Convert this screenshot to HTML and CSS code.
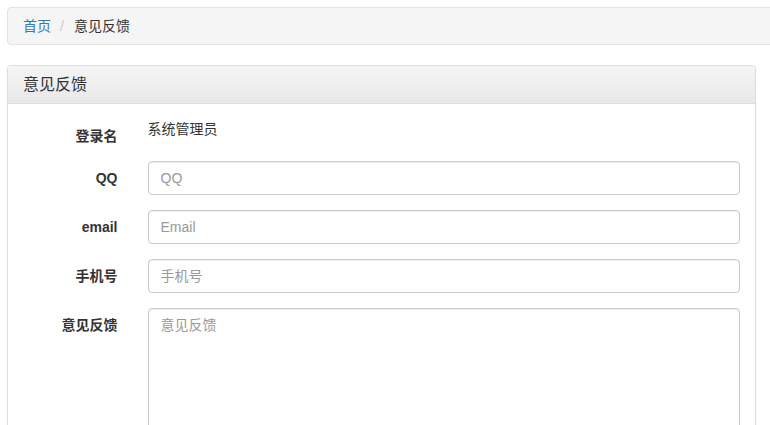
FILE: index.html
```html
<!DOCTYPE html>
<html lang="zh-CN">
<head>
    <meta charset="UTF-8">
    <meta name="viewport" content="width=device-width, initial-scale=1.0">
    <title>意见反馈</title>
    <link rel="stylesheet" href="styles.css">
</head>
<body>
    <div class="page">
        <ol class="breadcrumb">
            <li><a href="#">首页</a></li>
            <li class="active">意见反馈</li>
        </ol>

        <div class="panel">
            <div class="panel-heading">意见反馈</div>
            <div class="panel-body">
                <form class="form-horizontal">
                    <div class="form-group">
                        <label class="control-label">登录名</label>
                        <div class="control-col">
                            <p class="form-static">系统管理员</p>
                        </div>
                    </div>
                    <div class="form-group">
                        <label class="control-label" for="qq">QQ</label>
                        <div class="control-col">
                            <input type="text" id="qq" class="form-control" placeholder="QQ">
                        </div>
                    </div>
                    <div class="form-group">
                        <label class="control-label" for="email">email</label>
                        <div class="control-col">
                            <input type="text" id="email" class="form-control" placeholder="Email">
                        </div>
                    </div>
                    <div class="form-group">
                        <label class="control-label" for="phone">手机号</label>
                        <div class="control-col">
                            <input type="text" id="phone" class="form-control" placeholder="手机号">
                        </div>
                    </div>
                    <div class="form-group">
                        <label class="control-label" for="content">意见反馈</label>
                        <div class="control-col">
                            <textarea id="content" class="form-control textarea" placeholder="意见反馈"></textarea>
                        </div>
                    </div>
                </form>
            </div>
        </div>
    </div>
</body>
</html>
```

FILE: styles.css
```css
* {
    box-sizing: border-box;
}
body {
    margin: 0;
    font-family: "Liberation Sans", "Noto Sans CJK SC", sans-serif;
    font-size: 14px;
    line-height: 20px;
    color: #333;
    background-color: #fff;
    overflow: hidden;
}
.page {
    padding: 7px;
}
.breadcrumb {
    list-style: none;
    margin: 0 -40px 20px 0;
    padding: 8px 15px;
    background-color: #f5f5f5;
    border: 1px solid #e3e3e3;
    border-radius: 4px;
    display: flex;
}
.breadcrumb li + li::before {
    content: "/";
    color: #ccc;
    padding: 0 10px 0 9px;
}
.breadcrumb a {
    color: #337ab7;
    text-decoration: none;
}
.panel {
    width: 749px;
    border: 1px solid #ddd;
    border-radius: 4px;
    background-color: #fff;
    box-shadow: 0 1px 2px rgba(0, 0, 0, 0.05);
}
.panel-heading {
    padding: 10px 15px;
    font-size: 16px;
    line-height: 17px;
    color: #333;
    background-image: linear-gradient(to bottom, #f5f5f5 0%, #e8e8e8 100%);
    border-bottom: 1px solid #ddd;
    border-radius: 3px 3px 0 0;
}
.panel-body {
    padding: 15px;
}
.form-horizontal {
    margin: 0 -15px;
}
.form-group {
    display: grid;
    grid-template-columns: 16.6667% 1fr;
    margin-bottom: 15px;
}
.control-label {
    padding: 7px 15px 0;
    text-align: right;
    font-weight: bold;
}
.control-col {
    padding: 0 15px;
}
.form-static {
    margin: 0;
    padding-top: 0;
}
.form-control {
    display: block;
    width: 100%;
    height: 34px;
    padding: 6px 12px;
    font-family: inherit;
    font-size: 14px;
    line-height: 20px;
    color: #555;
    border: 1px solid #ccc;
    border-radius: 4px;
    box-shadow: inset 0 1px 1px rgba(0, 0, 0, 0.075);
}
.form-control::placeholder {
    color: #999;
}
.textarea {
    height: 160px;
    resize: vertical;
}
```
